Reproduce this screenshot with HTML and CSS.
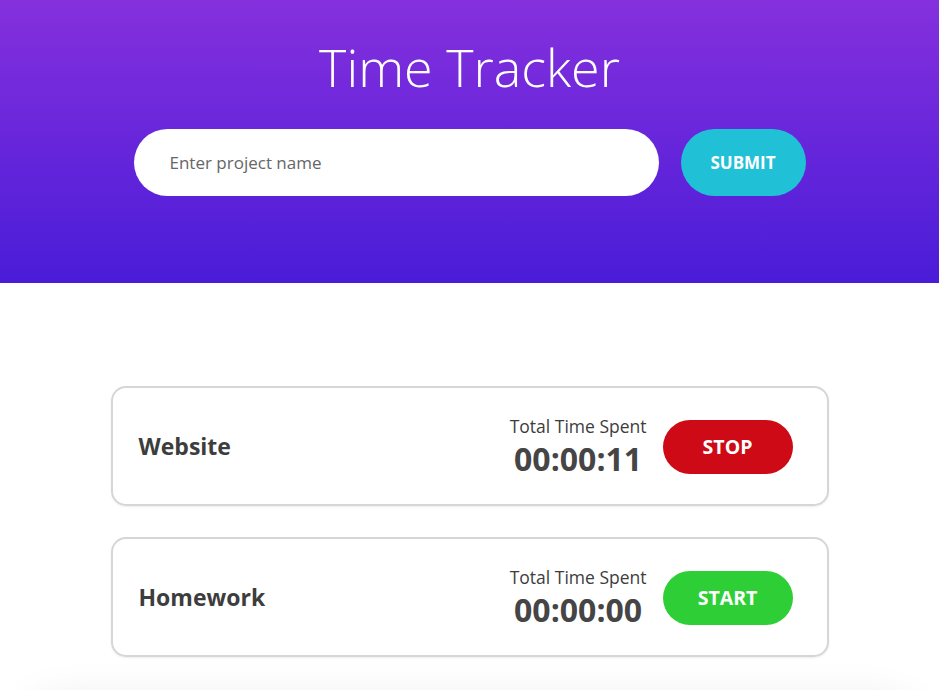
FILE: index.html
```html
<!DOCTYPE html>
<html lang="en">
<head>
<meta charset="utf-8">
<title>Time Tracker</title>
<link rel="stylesheet" href="styles.css">
</head>
<body>
<div class="page">
  <header class="hero">
    <h1 class="title">Time Tracker</h1>
    <form class="add-form">
      <input class="project-input" type="text" placeholder="Enter project name">
      <button class="btn btn-submit" type="button">Submit</button>
    </form>
  </header>
  <main class="projects">
    <div class="card">
      <div class="card-name">Website</div>
      <div class="card-right">
        <div class="time-block">
          <div class="time-label">Total Time Spent</div>
          <div class="time-value">00:00:11</div>
        </div>
        <button class="btn btn-action btn-stop" type="button">Stop</button>
      </div>
    </div>
    <div class="card">
      <div class="card-name">Homework</div>
      <div class="card-right">
        <div class="time-block">
          <div class="time-label">Total Time Spent</div>
          <div class="time-value">00:00:00</div>
        </div>
        <button class="btn btn-action btn-start" type="button">Start</button>
      </div>
    </div>
    <div class="fade-panel"></div>
  </main>
</div>
</body>
</html>
```

FILE: styles.css
```css
* { box-sizing: border-box; }

html, body {
  margin: 0;
  padding: 0;
  background: #ffffff;
  overflow: hidden;
}

body {
  font-family: "Open Sans", "Noto Sans", sans-serif;
  color: #404040;
}

.page {
  width: 939px;
}

.hero {
  height: 283px;
  padding-top: 36px;
  background: linear-gradient(to bottom, #8530dd 0%, #4a1cd8 100%);
  display: flex;
  flex-direction: column;
  align-items: center;
}

.title {
  margin: 0;
  font-size: 52px;
  font-weight: 300;
  line-height: 62px;
  color: #ffffff;
}

.add-form {
  margin-top: 31px;
  display: flex;
  gap: 22px;
}

.project-input {
  width: 525px;
  height: 67px;
  border: none;
  border-radius: 34px;
  padding: 0 36px;
  font-family: inherit;
  font-size: 17px;
  color: #444;
  background: #fff;
  outline: none;
}

.project-input::placeholder {
  color: #666;
  opacity: 1;
}

.btn {
  border: none;
  font-family: inherit;
  font-weight: 700;
  color: #fff;
  text-transform: uppercase;
  cursor: pointer;
}

.btn-submit {
  width: 125px;
  height: 67px;
  border-radius: 34px;
  background: #20c1d6;
  font-size: 17px;
}

.projects {
  padding-top: 103px;
  display: flex;
  flex-direction: column;
  align-items: center;
  gap: 31px;
}

.card {
  width: 718px;
  height: 120px;
  border: 2px solid #d6d6d6;
  border-radius: 15px;
  box-shadow: 0 1px 2px rgba(0, 0, 0, 0.08);
  display: flex;
  align-items: center;
  justify-content: space-between;
  padding: 0 34px 0 26px;
}

.card-name {
  font-size: 23px;
  font-weight: 700;
  color: #3d3d3d;
}

.card-right {
  display: flex;
  align-items: center;
  gap: 16px;
}

.time-block {
  text-align: center;
  color: #3d3d3d;
  padding-top: 1px;
}

.time-label {
  font-size: 17.5px;
  line-height: 20px;
  margin-bottom: 5px;
}

.time-value {
  font-size: 32px;
  font-weight: 700;
  line-height: 36px;
  color: #454545;
}

.btn-action {
  width: 130px;
  height: 54px;
  border-radius: 27px;
  font-size: 19.5px;
  margin-top: 1px;
}

.btn-stop { background: #cd0a15; }
.btn-start { background: #2ecf36; }

.fade-panel {
  width: 900px;
  height: 80px;
  margin-top: 14px;
  border-radius: 60px;
  background: #fff;
  box-shadow: 0 -6px 40px rgba(0, 0, 0, 0.07);
}
```
